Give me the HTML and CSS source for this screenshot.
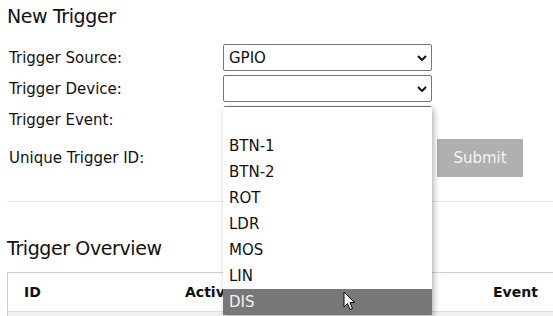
FILE: index.html
```html
<!DOCTYPE html>
<html lang="en">
<head>
    <meta charset="UTF-8">
    <title>Triggers</title>
    <link rel="stylesheet" href="styles.css">
</head>
<body>
    <div id="page">
        <h2 class="section-title">New Trigger</h2>
        <form id="trigger-form">
            <div class="form-row">
                <label>Trigger Source:</label>
                <div class="select">
                    <span class="select-value">GPIO</span>
                    <svg class="chevron" width="10" height="6" viewBox="0 0 10 6"><path d="M1 1 L5 5 L9 1" fill="none" stroke="#111" stroke-width="2"/></svg>
                </div>
            </div>
            <div class="form-row">
                <label>Trigger Device:</label>
                <div class="select">
                    <span class="select-value"></span>
                    <svg class="chevron" width="10" height="6" viewBox="0 0 10 6"><path d="M1 1 L5 5 L9 1" fill="none" stroke="#111" stroke-width="2"/></svg>
                    <ul class="dropdown">
                        <li></li>
                        <li>BTN-1</li>
                        <li>BTN-2</li>
                        <li>ROT</li>
                        <li>LDR</li>
                        <li>MOS</li>
                        <li>LIN</li>
                        <li class="hover">DIS</li>
                    </ul>
                    <svg class="cursor" width="13" height="20" viewBox="0 0 13 20"><path d="M1 1 L1 16 L4.5 12.5 L7 18.5 L9.5 17.5 L7 11.5 L11.5 11.5 Z" fill="#fff" stroke="#000" stroke-width="1" stroke-linejoin="round"/></svg>
                </div>
            </div>
            <div class="form-row">
                <label>Trigger Event:</label>
                <div class="select"></div>
            </div>
            <div class="form-row id-row">
                <label>Unique Trigger ID:</label>
                <input class="text-input" type="text">
                <button type="button" class="submit-btn" disabled>Submit</button>
            </div>
        </form>
        <hr>
        <h2 class="section-title overview">Trigger Overview</h2>
        <table id="trigger-table">
            <thead>
                <tr>
                    <th class="col-id">ID</th>
                    <th class="col-active">Active</th>
                    <th class="col-event">Event</th>
                    <th></th>
                </tr>
            </thead>
            <tbody>
                <tr><td></td><td></td><td></td><td></td></tr>
            </tbody>
        </table>
    </div>
</body>
</html>
```

FILE: styles.css
```css
body {
    margin: 0;
    font-family: "DejaVu Sans", Verdana, sans-serif;
    color: #111;
    overflow: hidden;
}

#page {
    padding: 4px 0 0 7px;
}

.section-title {
    margin: 0;
    font-size: 19px;
    font-weight: normal;
    line-height: 24px;
    letter-spacing: -0.4px;
}

#trigger-form {
    margin-top: 16px;
    display: flex;
    flex-direction: column;
    gap: 4px;
}

.form-row {
    display: flex;
    align-items: center;
    font-size: 15px;
}

.form-row label {
    width: 214px;
    padding-left: 2px;
}

.select {
    position: relative;
    width: 209px;
    height: 27px;
    box-sizing: border-box;
    border: 1px solid #767676;
    border-radius: 2px;
    display: flex;
    align-items: center;
    padding-left: 5px;
    font-size: 15px;
}

.select-value {
    flex: 1;
}

.chevron {
    margin-right: 4px;
}

.dropdown {
    position: absolute;
    top: 31px;
    left: -1px;
    width: 209px;
    margin: 0;
    padding: 0;
    list-style: none;
    background: #fff;
    box-shadow: 2px 2px 6px rgba(0,0,0,0.3);
    z-index: 10;
}

.dropdown li {
    height: 26px;
    line-height: 26px;
    padding-left: 6px;
}

.dropdown li.hover {
    background: #787878;
    color: #f2f2f2;
}

.cursor {
    position: absolute;
    left: 119px;
    top: 215px;
    z-index: 11;
}

.id-row {
    margin-top: 2px;
}

.text-input {
    width: 209px;
    height: 27px;
    box-sizing: border-box;
    border: 1px solid #767676;
    margin: 0;
}

.submit-btn {
    margin-left: 5px;
    width: 86px;
    height: 38px;
    border: none;
    background: #b0b0b0;
    color: #f4f4f4;
    font-family: inherit;
    font-size: 15px;
}

hr {
    margin: 24px 0 0 0;
    border: none;
    border-top: 1px solid #e6e6e6;
}

.overview {
    margin-top: 34px;
}

#trigger-table {
    margin-top: 12px;
    border-collapse: collapse;
    border: 1px solid #cfcfcf;
    width: 700px;
    font-size: 14px;
}

#trigger-table th {
    height: 38px;
    padding: 0 16px;
    text-align: left;
    border-bottom: 1px solid #dcdcdc;
}

#trigger-table th.col-id {
    width: 129px;
}

#trigger-table th.col-active {
    width: 276px;
}

#trigger-table td {
    height: 30px;
    background: #f1f1f1;
}
```
